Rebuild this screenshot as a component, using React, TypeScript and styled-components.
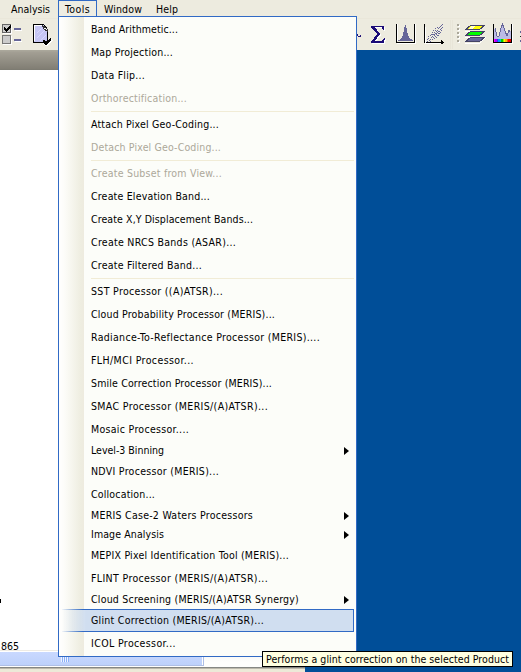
import React, { useLayoutEffect, useRef, useState } from 'react';
import styled, { createGlobalStyle, css } from 'styled-components';

const Global = createGlobalStyle`
  html, body { margin: 0; padding: 0; overflow: hidden; }
  body { font-family: "DejaVu Sans Condensed", "DejaVu Sans", "Noto Sans", sans-serif; font-stretch: condensed; font-size: 10.5px; color: #000; }
`;

const Window = styled.div`
  position: relative;
  width: 521px;
  height: 672px;
  overflow: hidden;
  display: flex;
  flex-direction: column;
  background: #edebdf;
`;

const MenuBar = styled.nav`
  flex: none;
  height: 19px;
  display: flex;
  border-bottom: 1px solid #eae7da;
  box-sizing: border-box;
`;

const MenuTitle = styled.div<{ $width: number; $pad: number; $open?: boolean }>`
  box-sizing: border-box;
  width: ${p => p.$width}px;
  height: 17px;
  padding-left: ${p => p.$pad}px;
  line-height: 18px;
  ${p => p.$open && css`
    border: 1px solid #316ac5;
    line-height: 16px;
    background: #eeede3;
  `}
`;

const ToolBar = styled.div`
  flex: none;
  height: 31px;
  display: flex;
  justify-content: space-between;
`;

const ToolGroup = styled.div<{ $width: number }>`
  width: ${p => p.$width}px;
  height: 31px;
`;

const Workspace = styled.main`
  flex: 1;
  display: flex;
  background: #004e98;
`;

const DocumentFrame = styled.section`
  width: 305px;
  display: flex;
  flex-direction: column;
  background: #fff;
`;

const DocumentTitle = styled.div`
  height: 20px;
  background: linear-gradient(#aaa79b 0, #aaa79b 1px, #a39f94 2px, #817e74 19px, #797970 20px);
`;

const DocumentBody = styled.div`
  flex: 1;
  display: flex;
  flex-direction: column;
  justify-content: flex-end;
`;

const AxisMark = styled.div`
  width: 1px;
  height: 4px;
  margin-bottom: 36px;
  background: #000;
`;

const AxisValue = styled.div`
  height: 11px;
  padding-left: 1px;
  line-height: 14px;
`;

const ScrollTrack = styled.div`
  height: 17px;
  flex: none;
  box-sizing: border-box;
  border-top: 1px solid #eeebe4;
  background: linear-gradient(#f5f5f3, #fefefc 70%);
`;

const ScrollThumb = styled.div`
  box-sizing: border-box;
  width: 204px;
  height: 15px;
  padding: 4px 0 0 61px;
  border: solid #aebfe5;
  border-width: 0 1px 1px 0;
  box-shadow: inset -1px 1px #fff;
  background: linear-gradient(#cad9ff, #bdd1fb);
`;

const ThumbGrip = styled.div`
  width: 8px;
  height: 7px;
  background: repeating-linear-gradient(90deg, #eef4ff 0 1px, #8cb0f8 1px 2px);
`;

const FrameEdge = styled.div`
  height: 5px;
  flex: none;
  background: linear-gradient(#858783 0, #858783 1px, #bdb9ac 1px, #bdb9ac 2px, #ece9d8 2px);
`;

const Dropdown = styled.div`
  position: absolute;
  left: 58px;
  top: 16px;
  width: 299px;
  height: 641px;
  box-sizing: border-box;
  border: 1px solid #316ac5;
  padding: 1px 2px 1px 3px;
  background: linear-gradient(90deg, #fff 0, #fcfcf8 6px, #eeede0 22px, #eeebdf 25px, #fcfdf9 25px);
`;

const Item = styled.div<{ $sub?: boolean; $muted?: boolean; $active?: boolean }>`
  box-sizing: border-box;
  height: ${p => (p.$sub ? 19 : 23)}px;
  display: flex;
  align-items: center;
  justify-content: space-between;
  padding: 0 5px 0 29px;
  color: ${p => (p.$muted ? '#aca899' : '#000')};
  ${p => p.$active && css`
    border: solid #316ac5;
    border-width: 1px 1px 1px 0;
    border-image: linear-gradient(90deg, #316ac500, #316ac5 22px) 1;
    background: linear-gradient(90deg, #d0def000, #d0def0 24px);
  `}
`;

const Separator = styled.div`
  height: 1px;
  margin: 1px 0 1px 29px;
  background: #f1ecd6;
`;

const Text = styled.span`
  white-space: pre;
  line-height: 15px;
`;

const Arrow = styled.i`
  width: 0;
  border: solid transparent;
  border-width: 4px 0 4px 5px;
  border-left-color: #000;
`;

const Tooltip = styled.div`
  position: absolute;
  left: 262px;
  top: 651px;
  width: 251px;
  height: 16px;
  box-sizing: border-box;
  border: 1px solid #000;
  padding-left: 3px;
  line-height: 14px;
  background: #ffffe1;
`;

/* Spreads the letters so that a label takes exactly its allotted width. */
function Label({ text, width }: { text: string; width: number }) {
  const ref = useRef<HTMLSpanElement>(null);
  const [spacing, setSpacing] = useState(0);
  useLayoutEffect(() => {
    if (ref.current) setSpacing((width - ref.current.getBoundingClientRect().width) / text.length);
  }, [text, width]);
  return <Text ref={ref} style={{ letterSpacing: spacing }}>{text}</Text>;
}

type Entry = { t: string; w: number; sub?: boolean; muted?: boolean; active?: boolean };
const groups: Entry[][] = [
  [
    { t: 'Band Arithmetic...', w: 87 },
    { t: 'Map Projection...', w: 82 },
    { t: 'Data Flip...', w: 54 },
    { t: 'Orthorectification...', w: 96, muted: true },
  ],
  [
    { t: 'Attach Pixel Geo-Coding...', w: 128 },
    { t: 'Detach Pixel Geo-Coding...', w: 130, muted: true },
  ],
  [
    { t: 'Create Subset from View...', w: 131, muted: true },
    { t: 'Create Elevation Band...', w: 119 },
    { t: 'Create X,Y Displacement Bands...', w: 162 },
    { t: 'Create NRCS Bands (ASAR)...', w: 145 },
    { t: 'Create Filtered Band...', w: 111 },
  ],
  [
    { t: 'SST Processor ((A)ATSR)...', w: 132 },
    { t: 'Cloud Probability Processor (MERIS)...', w: 184 },
    { t: 'Radiance-To-Reflectance Processor (MERIS)....', w: 229 },
    { t: 'FLH/MCI Processor...', w: 103 },
    { t: 'Smile Correction Processor (MERIS)...', w: 181 },
    { t: 'SMAC Processor (MERIS/(A)ATSR)...', w: 177 },
    { t: 'Mosaic Processor....', w: 98 },
    { t: 'Level-3 Binning', w: 73, sub: true },
    { t: 'NDVI Processor (MERIS)...', w: 128 },
    { t: 'Collocation...', w: 64 },
    { t: 'MERIS Case-2 Waters Processors', w: 162, sub: true },
    { t: 'Image Analysis', w: 73, sub: true },
    { t: 'MEPIX Pixel Identification Tool (MERIS)...', w: 198 },
    { t: 'FLINT Processor (MERIS/(A)ATSR)...', w: 177 },
    { t: 'Cloud Screening (MERIS/(A)ATSR Synergy)', w: 208, sub: true },
    { t: 'Glint Correction (MERIS/(A)ATSR)...', w: 173, active: true },
    { t: 'ICOL Processor...', w: 85 },
  ],
];

const LeftTools = () => (
  <svg width="58" height="31" viewBox="0 19 58 31" shapeRendering="crispEdges">
    <path d="M3 33.5h8.5V25M3 44.5h8.5V36" fill="none" stroke="#fff" />
    <rect x="2.5" y="24.5" width="8" height="8" fill="#ccc" stroke="#666" />
    <rect x="2.5" y="35.5" width="8" height="8" fill="#ccc" stroke="#777" />
    <path d="M4 27v3l2 2 5-5v-3l-5 5z" fill="#000" />
    <path d="M14 28h7v2h-7zM14 39h7v2h-7z" fill="#666699" />
    <path d="M15 30.5h7M15 41.5h7" stroke="#fff" />
    <path d="M33.5 24.5h10l4 5v12l-3 1h-11z" fill="#c6c6f4" stroke="#000" />
    <path d="M34.5 41V25.5H42" fill="none" stroke="#fff" />
    <path d="M37 38l8-8M37 33l5-5M40 41l6-6" stroke="#d8d8ff" />
    <path d="M42 25l2 4 3 2v-2z" fill="#fff" stroke="#333" />
    <path d="M44 43l2 2h1l5-5" fill="none" stroke="#fff" strokeWidth="2" />
    <path d="M43 40h2l1 2 4-4h1v2l-5 5h-1l-2-3z" fill="#000" />
  </svg>
);

const dots = [
  [430,39],[431,37],[432,36],[431,34],[433,37],[434,35],[433,34],[434,32],[435,36],[436,34],
  [435,33],[437,32],[436,31],[438,33],[437,30],[438,28],[439,31],[440,29],[439,27],[441,30],
  [440,26],[442,27],[441,25],[428,38],[435,30],[433,30],[438,35],[434,38],[442,24],[429,40],
  [427,39],[428,36],[430,35],[432,39],[436,37],[437,35],[439,33],[432,32],[435,28],[441,28],
  [437,27],[427,41],[430,41],[434,34],[436,33],[438,31],[432,34],[440,32],
];
const spectrum = ['#f0f', '#a0f', '#33f', '#09f', '#0cc', '#0c0', '#9e0', '#ff0', '#fb0', '#f50', '#f00', '#d00'];
const sigma = 'M371 26h13v4h-1l-1-3h-7l5 7-5 7h7l2-3h1l-1 5h-13v-1l6-8-6-7z';

const RightTools = () => (
  <svg width="164" height="31" viewBox="357 19 164 31" shapeRendering="crispEdges">
    <path d="M357 34l1 2h2v-1" fill="none" stroke="#241478" />
    <path d={sigma} transform="translate(1 1)" fill="#fff" />
    <path d={sigma} fill="#1b0b78" />
    <path d="M396.5 24v18.5h18V24" fill="none" stroke="#000" />
    <path d="M397.5 24v17M415.5 24v19.5H397" fill="none" stroke="#fff" />
    <path d="M398 41v-1l3-1 2-4 1-5 1-5h1l1 5 1 5 2 4 3 1v1z" fill="#666699" />
    <path d="M424.5 25v17.5H443" fill="none" stroke="#000" />
    <path d="M425.5 27v16.5H443" fill="none" stroke="#fff" />
    <path d="M423 27h1v-3h1v3h1zM441 40l3 2.5-3 2z" fill="#000" />
    {dots.map(([x, y]) => <rect key={`${x}-${y}`} x={x} y={y} width="1" height="1" fill="#666699" />)}
    <path d="M450.5 20v29M452.5 20v29" stroke="#e8e5d8" />
    {[24, 28, 32, 36, 40].map(y => (
      <g key={y}><rect x="458" y={y + 1} width="2" height="2" fill="#fff" /><rect x="457" y={y} width="2" height="2" fill="#aaa79a" /></g>
    ))}
    <path d="M465 31.5h15M465 37h15M465 43h15l6-6" fill="none" stroke="#fff" />
    <path d="M470.5 37.5h14l-5 4h-14z" fill="#666699" stroke="#444466" />
    <path d="M470.5 31.5h14l-5 4h-14z" fill="#0f0" stroke="#444466" />
    <path d="M470.5 25.5h14l-5 4h-14z" fill="#ff0" stroke="#444466" />
    <path d="M471 26h5l-4 3h-4z" fill="#ffffd0" />
    <path d="M494 39v-11l3 8h2l2-8 1-4h1l2 7 2 5 2-6 2 1v8z" fill="#bbbbe6" />
    <path d="M495 28l2 8h2l2-8 1.5-4 2.5 7 2 5 2-6 1 2" fill="none" stroke="#666699" />
    {spectrum.map((c, i) => <rect key={c} x={494 + i * 1.42} y="39" width="1.6" height="3" fill={c} />)}
    <path d="M493.5 24v18.5h18V24" fill="none" stroke="#000" />
    <path d="M494 43.5h18.5V24" fill="none" stroke="#fff" />
    <path d="M520 32h1M520 41h1" stroke="#666699" strokeWidth="2" />
    <path d="M520 36h1" stroke="#222" />
  </svg>
);

export default function App() {
  return (
    <>
      <Global />
      <Window>
        <MenuBar>
          <MenuTitle $width={58} $pad={11}><Label text="Analysis" width={39} /></MenuTitle>
          <MenuTitle $width={39} $pad={6} $open><Label text="Tools" width={25} /></MenuTitle>
          <MenuTitle $width={52} $pad={7}><Label text="Window" width={38} /></MenuTitle>
          <MenuTitle $width={50} $pad={7}><Label text="Help" width={22} /></MenuTitle>
        </MenuBar>
        <ToolBar>
          <ToolGroup $width={58}><LeftTools /></ToolGroup>
          <ToolGroup $width={164}><RightTools /></ToolGroup>
        </ToolBar>
        <Workspace>
          <DocumentFrame>
            <DocumentTitle />
            <DocumentBody>
              <AxisMark />
              <AxisValue><Label text="865" width={18} /></AxisValue>
            </DocumentBody>
            <ScrollTrack><ScrollThumb><ThumbGrip /></ScrollThumb></ScrollTrack>
            <FrameEdge />
          </DocumentFrame>
        </Workspace>
        <Dropdown>
          {groups.map((group, g) => (
            <React.Fragment key={g}>
              {g > 0 && <Separator />}
              {group.map(e => (
                <Item key={e.t} $sub={e.sub} $muted={e.muted} $active={e.active}>
                  <Label text={e.t} width={e.w} />
                  {e.sub && <Arrow />}
                </Item>
              ))}
            </React.Fragment>
          ))}
        </Dropdown>
        <Tooltip><Label text="Performs a glint correction on the selected Product" width={243} /></Tooltip>
      </Window>
    </>
  );
}
